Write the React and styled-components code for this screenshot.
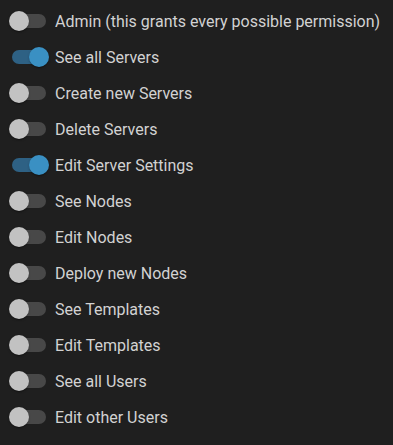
import React from "react";
import styled, { createGlobalStyle } from "styled-components";

const Global = createGlobalStyle`
  html, body { margin: 0; padding: 0; background: #1f1f1f; }
  body { font-family: Roboto, "Noto Sans", Arial, sans-serif; }
`;

const List = styled.div`
  display: flex;
  flex-direction: column;
  padding-top: 4px;
  width: 393px;
  height: 441px;
  background: #1f1f1f;
`;

const Row = styled.label`
  display: flex;
  align-items: center;
  height: 36px;
  cursor: pointer;
`;

const Switch = styled.span`
  position: relative;
  flex: 0 0 auto;
  width: 58px;
  height: 36px;
`;

const Track = styled.span`
  position: absolute;
  left: 12px;
  top: 10px;
  width: 34px;
  height: 14px;
  border-radius: 7px;
  background: ${(p) => (p.$on ? "#2e6184" : "#484848")};
`;

const Thumb = styled.span`
  position: absolute;
  top: 7px;
  left: ${(p) => (p.$on ? "29px" : "9px")};
  width: 20px;
  height: 20px;
  border-radius: 50%;
  background: ${(p) => (p.$on ? "#3a90c3" : "#c2c2c2")};
  box-shadow: 0 2px 1px -1px rgba(0,0,0,0.2), 0 1px 1px 0 rgba(0,0,0,0.14), 0 1px 3px 0 rgba(0,0,0,0.12);
`;

const Label = styled.span`
  margin-left: -3px;
  font-size: 16px;
  line-height: 24px;
  color: #d2d2d2;
  white-space: nowrap;
`;

const perms = [
  ["Admin (this grants every possible permission)", false],
  ["See all Servers", true],
  ["Create new Servers", false],
  ["Delete Servers", false],
  ["Edit Server Settings", true],
  ["See Nodes", false],
  ["Edit Nodes", false],
  ["Deploy new Nodes", false],
  ["See Templates", false],
  ["Edit Templates", false],
  ["See all Users", false],
  ["Edit other Users", false],
];

export default function App() {
  return (
    <>
      <Global />
      <List>
        {perms.map(([label, on]) => (
          <Row key={label}>
            <Switch>
              <Track $on={on} />
              <Thumb $on={on} />
            </Switch>
            <Label>{label}</Label>
          </Row>
        ))}
      </List>
    </>
  );
}
